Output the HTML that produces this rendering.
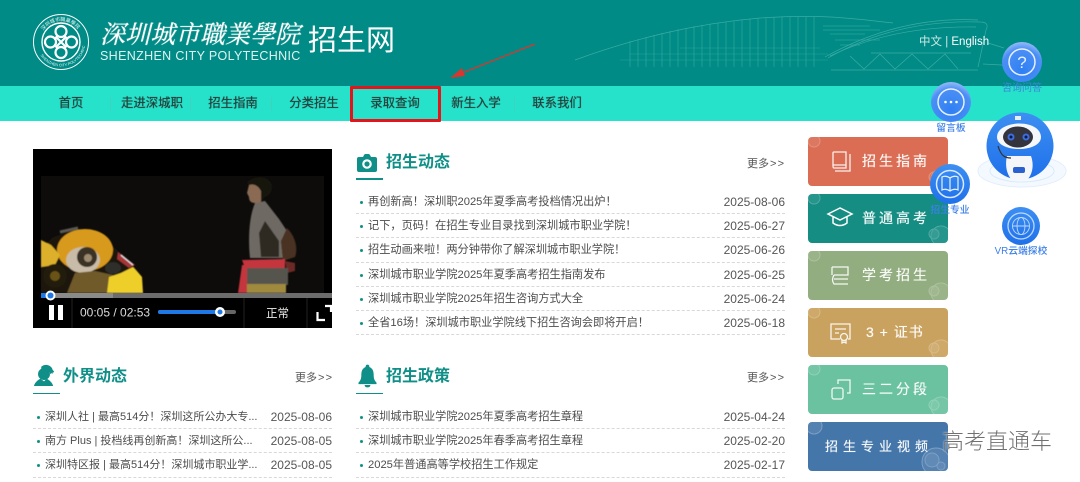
<!DOCTYPE html>
<html lang="zh-CN">
<head>
<meta charset="utf-8">
<title>深圳城市职业学院招生网</title>
<style>
*{margin:0;padding:0;box-sizing:border-box}
html,body{width:1080px;height:482px;overflow:hidden;background:#fff}
body{position:relative;font-family:"Liberation Sans","Noto Sans CJK SC",sans-serif;color:#444;font-size:12px}
.a{position:absolute;white-space:nowrap}
#hd{position:absolute;left:0;top:0;width:1080px;height:86px;background:#008b86}
#nav{position:absolute;left:0;top:86px;width:1080px;height:35px;background:#26e2cb}
.n{position:absolute;top:86px;height:35px;line-height:35px;width:80px;text-align:center;font-size:12.4px;color:#24423c;text-shadow:0 0 .7px #24423c}
.sep{position:absolute;top:97px;width:1px;height:14px;background:#3fd3be}
#box{position:absolute;left:350px;top:86px;width:91px;height:36px;border:3.5px solid #e5141b;border-radius:1px}
.tt{position:absolute;font-size:16px;font-weight:700;color:#0f8f88;line-height:20px;white-space:nowrap}
.ul{position:absolute;width:27px;background:#0f8f88}
.more{position:absolute;font-size:11px;line-height:16px;color:#555;white-space:nowrap}
.more i{font-style:normal;letter-spacing:1.2px;margin-left:1px}
.li{position:absolute;height:24.2px;border-bottom:1px dashed #d8d8d8;line-height:24px;font-size:11.2px;color:#4c4c4c;white-space:nowrap}
.li.s{font-size:11px}
.li:before{content:"";position:absolute;left:4px;top:11px;width:3px;height:3px;border-radius:50%;background:#0f8f88}
.li span{position:absolute;left:12px;top:0}
.li b{position:absolute;right:0;top:0;font-weight:400;color:#555;font-size:12px}
.card{position:absolute;left:808px;width:140px;height:49px;border-radius:4px;color:#fff;font-size:14px;line-height:49px;overflow:hidden;opacity:.97}
.card .tx{position:absolute;top:0;white-space:nowrap;opacity:.95;letter-spacing:3px;text-shadow:0 0 .5px #fff}
.card svg{position:absolute;left:0;top:0}
.fl{position:absolute;font-size:9.5px;color:#3d80e8;text-align:center;white-space:nowrap;font-weight:500;transform:translateX(-50%);line-height:12px}
</style>
</head>
<body>
<div id="hd"></div>
<svg class="a" style="left:560px;top:0" width="520" height="86" fill="none" stroke="#5cbcb5" stroke-width=".7" opacity=".65">
<path d="M15 60C70 40 130 24 200 18C260 14 290 18 333 23"/>
<g opacity=".5"><path d="M60 60H268M70 54H268M120 48H260"/></g>
<path d="M263 26H310M263 30H320M270 34H305M275 40H320M280 45H300" opacity=".7"/>
<path d="M70 41V67M78 39V67M86 37V67M94 35V67M102 33V67M110 31V67M118 29V67M126 28V67M134 26V67M142 25V67M150 24V67M158 23V67M166 22V67M174 21V67M182 20V67M190 19V67M198 18V67M206 18V67M214 17V67M222 17V67M230 17V67M238 17V67M246 17V67M254 17V67" opacity=".8"/>
<path d="M268 58C310 34 360 20 420 22C428 22 428 26 426 30L418 67"/>
<path d="M270 56C312 36 362 26 416 27M265 57C310 32 360 17 418 20"/>
<path d="M271 70H418M311 53H411M290 56L304 69L320 54L335 69L352 54L368 69L385 54L398 69"/>
<path d="M428 43L444 48M423 64L460 66"/>
</svg>
<!-- logo -->
<svg class="a" style="left:32px;top:13px" width="58" height="58" viewBox="0 0 58 58" fill="none" stroke="#fff">
<circle cx="29" cy="29" r="27.500" stroke-width="1"/>
<circle cx="29" cy="29" r="19" stroke-width="1.400"/>
<path id="tp" d="M8 29A21 21 0 0 1 50 29" stroke="none"/>
<path id="bp" d="M4.500 29A24.500 24.500 0 0 0 53.500 29" stroke="none"/>
<text font-size="5" fill="#e8f6f5" stroke="none" font-family="Noto Sans CJK TC,sans-serif"><textPath href="#tp" textLength="40" startOffset="12">深圳城市職業學院</textPath></text>
<text font-size="3.800" fill="#e8f6f5" stroke="none" font-family="Liberation Sans,sans-serif"><textPath href="#bp" startOffset="14">SHENZHEN CITY POLYTECHNIC</textPath></text>
<g stroke-width="2.200">
<circle cx="29" cy="18.500" r="5.500"/><circle cx="29" cy="39.500" r="5.500"/><circle cx="18.500" cy="29" r="5.500"/><circle cx="39.500" cy="29" r="5.500"/>
<path d="M23.500 23.500L34.500 34.500M34.500 23.500L23.500 34.500"/>
</g>
</svg>
<div class="a" style="left:100px;top:16px;font-family:'Noto Serif CJK SC','Noto Serif CJK TC',serif;font-size:25px;line-height:34px;color:#fff;font-style:italic;text-shadow:0 0 .9px #fff">深圳城市職業學院</div>
<div class="a" style="left:100px;top:48px;font-size:12.500px;line-height:16px;color:#dff3f1;letter-spacing:.35px">SHENZHEN CITY POLYTECHNIC</div>
<div class="a" style="left:308px;top:21px;font-size:29px;line-height:40px;color:#fff">招生网</div>
<div class="a" style="left:919px;top:34px;font-size:11.500px;line-height:16px;color:#cfe8e6">中文 | <span style="color:#fff">English</span></div>
<svg class="a" style="left:445px;top:38px" width="95" height="45"><path d="M90 6L12 37" stroke="#d8362e" stroke-width="1.300"/><path d="M5 40L17 30L20 38Z" fill="#d8362e"/></svg>

<div id="nav"></div>
<div class="n" style="left:31px">首页</div>
<div class="n" style="left:112px">走进深城职</div>
<div class="n" style="left:193px">招生指南</div>
<div class="n" style="left:274px">分类招生</div>
<div class="n" style="left:355px">录取查询</div>
<div class="n" style="left:436px">新生入学</div>
<div class="n" style="left:517px">联系我们</div>
<div class="sep" style="left:110px"></div><div class="sep" style="left:190px"></div><div class="sep" style="left:271px"></div><div class="sep" style="left:514px"></div>
<div id="box"></div>

<!-- video -->
<svg class="a" style="left:33px;top:149px" width="299" height="180" viewBox="0 0 299 180">
<defs><filter id="b"><feGaussianBlur stdDeviation=".6"/></filter></defs>
<rect width="299" height="179" fill="#000"/>
<rect x="8" y="27" width="283" height="117" fill="#0d0c0b"/>
<g filter="url(#b)">
<!-- lion -->
<path d="M8 144V100L20 88L45 80L70 88L85 102L100 116L109 128L109 144Z" fill="#1a1408"/>
<ellipse cx="52" cy="101" rx="28" ry="21" fill="#d89a1a"/>
<path d="M8 91L18 96L27 106L22 116L8 118Z" fill="#dcb02a"/>
<ellipse cx="50" cy="111" rx="17" ry="13" fill="#c8bca8"/>
<ellipse cx="54" cy="108" rx="10" ry="10" fill="#3a3026"/>
<circle cx="55" cy="109" r="4" fill="#9c8a70"/>
<circle cx="22" cy="127" r="12" fill="#211a0c"/>
<circle cx="22" cy="127" r="5" fill="#6b5212"/>
<path d="M34 144L42 124L62 122L80 126L82 144Z" fill="#6f5a2a"/>
<path d="M74 144L76 128L88 124L100 118L109 128L110 144Z" fill="#eecf2c"/>
<ellipse cx="80" cy="119" rx="8" ry="6" fill="#2f2e2a"/>
<path d="M85 103L102 116L96 119L84 110Z" fill="#a53438"/>
<path d="M88 106L100 116" stroke="#ddd" stroke-width="1.500"/>
<path d="M27 83L45 79" stroke="#5a5a52" stroke-width="3"/>
<!-- man -->
<path d="M214 34C216 28 236 24 239 36C240 42 236 48 232 48L229 52H224V42L216 36Z" fill="#15120f"/>
<path d="M216 36C222 34 226 38 228 42L228 54H222C218 54 216 52 216 48L214 44Z" fill="#8a6a52"/>
<path d="M222 54L232 52L246 70L254 82L248 92L250 109H217C215 90 216 68 222 54Z" fill="#6e6b64"/>
<path d="M232 72L246 92L246 108H228L226 84Z" fill="#2e2a24"/>
<path d="M254 79C263 88 265 100 262 108L250 112L248 92Z" fill="#4a3022"/>
<path d="M209 111L252 110L252 119H212Z" fill="#c4363e"/>
<path d="M209 116H215L214 144H205Z" fill="#c4363e"/>
<path d="M252 112L262 114L262 122L254 124Z" fill="#6c2a28"/>
<path d="M214 119H255V136H214Z" fill="#55544e"/>
<path d="M214 135H253V144H214Z" fill="#a08a3c"/>
</g>
<!-- bars -->
<rect x="8" y="144" width="291" height="5" fill="#6c6c6c"/>
<rect x="8" y="144" width="72" height="5" fill="#8a8a8a"/>
<rect x="8" y="144" width="9" height="5" fill="#1e78e6"/>
<circle cx="17.500" cy="146.500" r="5" fill="#fff"/><circle cx="17.500" cy="146.500" r="3" fill="#1e78e6"/>
<rect x="16" y="156" width="5" height="15" fill="#fff"/><rect x="25" y="156" width="5" height="15" fill="#fff"/>
<path d="M39 149V179M211 149V179M274 149V179" stroke="#222"/>
<rect x="125" y="161" width="78" height="4" rx="2" fill="#666"/>
<rect x="125" y="161" width="63" height="4" rx="2" fill="#1e78e6"/>
<circle cx="187" cy="163" r="5" fill="#fff"/><circle cx="187" cy="163" r="2.500" fill="#1e78e6"/>
<path d="M284.500 163V171H292M292 157H298V163" fill="none" stroke="#fff" stroke-width="2.200"/>
<text x="47" y="167.500" font-size="12" fill="#ddd" font-family="Liberation Sans,sans-serif">00:05 / 02:53</text>
<text x="233" y="168" font-size="11.500" fill="#eee" font-family="Liberation Sans,Noto Sans CJK SC,sans-serif">正常</text>
</svg>

<!-- section 招生动态 -->
<svg class="a" style="left:357px;top:154px" width="20" height="18" viewBox="0 0 20 18"><path d="M2 3H6L7 1Q7.500 0 8.500 0H11.500Q12.500 0 13 1L14 3H18Q20 3 20 5V16Q20 18 18 18H2Q0 18 0 16V5Q0 3 2 3Z" fill="#0f8f88"/><circle cx="10" cy="10" r="3.700" fill="none" stroke="#fff" stroke-width="2.200"/></svg>
<div class="tt" style="left:386px;top:153px">招生动态</div>
<div class="ul" style="left:356px;top:178px;height:2px"></div>
<div class="more" style="left:747px;top:156px">更多<i>&gt;&gt;</i></div>

<div class="li" style="left:356px;top:190px;width:429px"><span>再创新高！深圳职2025年夏季高考投档情况出炉！</span><b>2025-08-06</b></div>
<div class="li" style="left:356px;top:214.200px;width:429px"><span>记下，页码！在招生专业目录找到深圳城市职业学院！</span><b>2025-06-27</b></div>
<div class="li" style="left:356px;top:238.400px;width:429px"><span>招生动画来啦！两分钟带你了解深圳城市职业学院！</span><b>2025-06-26</b></div>
<div class="li" style="left:356px;top:262.600px;width:429px"><span>深圳城市职业学院2025年夏季高考招生指南发布</span><b>2025-06-25</b></div>
<div class="li" style="left:356px;top:286.800px;width:429px"><span>深圳城市职业学院2025年招生咨询方式大全</span><b>2025-06-24</b></div>
<div class="li" style="left:356px;top:311px;width:429px"><span>全省16场！深圳城市职业学院线下招生咨询会即将开启！</span><b>2025-06-18</b></div>

<!-- section 外界动态 -->
<svg class="a" style="left:33px;top:364px" width="22" height="22" viewBox="0 0 22 24" fill="#0f8f88"><circle cx="11" cy="11" r="6.500"/><path d="M8 3C11 0 17 0 20 5C21 8 20 10 18 11C17 7 13 5 8 6Z"/><path d="M20 6L22 8L20 11Z"/><path d="M7 16C4 18 1 20 0 24H21C20 20 17 18 14 16L11 19Z"/></svg>
<div class="tt" style="left:63px;top:367px">外界动态</div>
<div class="ul" style="left:33px;top:393px;height:1px"></div>
<div class="more" style="left:295px;top:370px">更多<i>&gt;&gt;</i></div>
<div class="li s" style="left:33px;top:405px;width:299px"><span>深圳人社 | 最高514分！深圳这所公办大专...</span><b>2025-08-06</b></div>
<div class="li s" style="left:33px;top:429.200px;width:299px"><span>南方 Plus | 投档线再创新高！深圳这所公...</span><b>2025-08-05</b></div>
<div class="li s" style="left:33px;top:453.400px;width:299px"><span>深圳特区报 | 最高514分！深圳城市职业学...</span><b>2025-08-05</b></div>

<!-- section 招生政策 -->
<svg class="a" style="left:358px;top:364px" width="19" height="24" viewBox="0 0 20 24" fill="#0f8f88"><path d="M10 0C11.500 0 12 1 12 2.500C15.500 4 16.500 7 16.500 11C16.500 15 17.500 17 19.500 19V20.500H.5V19C2.500 17 3.500 15 3.500 11C3.500 7 4.500 4 8 2.500C8 1 8.500 0 10 0Z"/><path d="M7 21.500H13C13 23.500 11.500 24 10 24C8.500 24 7 23.500 7 21.500Z"/></svg>
<div class="tt" style="left:386px;top:367px">招生政策</div>
<div class="ul" style="left:356px;top:393px;height:1px"></div>
<div class="more" style="left:747px;top:370px">更多<i>&gt;&gt;</i></div>
<div class="li" style="left:356px;top:405px;width:429px"><span>深圳城市职业学院2025年夏季高考招生章程</span><b>2025-04-24</b></div>
<div class="li" style="left:356px;top:429.200px;width:429px"><span>深圳城市职业学院2025年春季高考招生章程</span><b>2025-02-20</b></div>
<div class="li" style="left:356px;top:453.400px;width:429px"><span>2025年普通高等学校招生工作规定</span><b>2025-02-17</b></div>

<!-- cards -->
<div class="card" style="top:137px;background:#d9694f"><svg width="140" height="49" fill="none" stroke="#fff"><g opacity=".25" fill="#fff" fill-opacity=".3"><circle cx="6" cy="4" r="6"/><circle cx="133" cy="42" r="10"/><circle cx="126" cy="40" r="5"/></g><g opacity=".9" stroke-width="1.300"><path d="M26 15H38V31H26Q25 31 25 29V16Q25 15 26 15ZM25 28H38"/><path d="M42 17V34H27"/></g></svg><div class="tx" style="left:54px">招生指南</div></div>
<div class="card" style="top:194px;background:#0f8a80"><svg width="140" height="49" fill="none" stroke="#fff"><g opacity=".25" fill="#fff" fill-opacity=".3"><circle cx="6" cy="4" r="6"/><circle cx="133" cy="42" r="10"/><circle cx="126" cy="40" r="5"/></g><g stroke-width="1.500"><path d="M32 14L20 20L32 26L44 20Z"/><path d="M25 23V29Q32 34 39 29V23"/></g></svg><div class="tx" style="left:54px">普通高考</div></div>
<div class="card" style="top:251px;background:#8fab7c"><svg width="140" height="49" fill="none" stroke="#fff"><g opacity=".25" fill="#fff" fill-opacity=".3"><circle cx="6" cy="4" r="6"/><circle cx="133" cy="42" r="10"/><circle cx="126" cy="40" r="5"/></g><g opacity=".9" stroke-width="1.300"><path d="M24 16H40V24H26M26 24Q23 29 26 33H40M26 28H40M24 16V24"/></g></svg><div class="tx" style="left:54px">学考招生</div></div>
<div class="card" style="top:308px;background:#c9a05a"><svg width="140" height="49" fill="none" stroke="#fff"><g opacity=".25" fill="#fff" fill-opacity=".3"><circle cx="6" cy="4" r="6"/><circle cx="133" cy="42" r="10"/><circle cx="126" cy="40" r="5"/></g><g opacity=".9" stroke-width="1.300"><path d="M32 31H23V16H42V31H40"/><path d="M27 21H38M27 25H31"/><circle cx="36" cy="29" r="3.500"/><path d="M34 32V35L36 34L38 35V32"/></g></svg><div class="tx" style="left:58px;letter-spacing:1px">3 + 证书</div></div>
<div class="card" style="top:365px;background:#66c19d"><svg width="140" height="49" fill="none" stroke="#fff"><g opacity=".25" fill="#fff" fill-opacity=".3"><circle cx="6" cy="4" r="6"/><circle cx="133" cy="42" r="10"/><circle cx="126" cy="40" r="5"/></g><g opacity=".9" stroke-width="1.300"><rect x="24" y="23" width="11" height="11" rx="2"/><path d="M30 19V15H42V28H39"/></g></svg><div class="tx" style="left:54px">三二分段</div></div>
<div class="card" style="top:422px;background:#3f72a8"><svg width="140" height="49" fill="none" stroke="#fff"><g opacity=".3" fill="#fff" fill-opacity=".3"><circle cx="6" cy="4" r="8"/><circle cx="128" cy="40" r="14"/><circle cx="124" cy="38" r="7"/><circle cx="133" cy="44" r="4"/></g></svg><div class="tx" style="left:17px;font-size:13px;letter-spacing:5px">招生专业视频</div></div>

<!-- floating buttons -->
<svg class="a" style="left:925px;top:35px" width="155" height="230" viewBox="925 35 155 230">
<defs>
<radialGradient id="g" cx=".5" cy=".7" r=".75"><stop offset="0" stop-color="#2f80f4"/><stop offset=".7" stop-color="#4c8ff5"/><stop offset="1" stop-color="#a9c8f8"/></radialGradient>
<linearGradient id="r" x1="0" y1="0" x2="0" y2="1"><stop offset="0" stop-color="#3d8ff2"/><stop offset="1" stop-color="#1f70ea"/></linearGradient>
</defs>
<circle cx="1022" cy="62" r="20" fill="url(#g)"/>
<circle cx="1022" cy="62" r="13" fill="none" stroke="#e6f0ff" stroke-width="1.500"/>
<text x="1022" y="68" text-anchor="middle" font-size="17" fill="#e6f0ff" font-family="Liberation Sans,sans-serif">?</text>
<circle cx="951" cy="102" r="20" fill="url(#g)"/>
<circle cx="951" cy="102" r="13" fill="none" stroke="#e6f0ff" stroke-width="1.500"/>
<circle cx="945.500" cy="102" r="1.300" fill="#fff"/><circle cx="951" cy="102" r="1.300" fill="#fff"/><circle cx="956.500" cy="102" r="1.300" fill="#fff"/>
<!-- robot -->
<ellipse cx="1022" cy="171" rx="44" ry="16" fill="#eef6ff" opacity=".6" stroke="#cfe4fb"/>
<ellipse cx="1022" cy="171" rx="32" ry="11" fill="none" stroke="#d8eafc"/>
<circle cx="1020" cy="146" r="33.500" fill="url(#r)"/>
<path d="M997 137C997 120 1040 118 1041 137C1041 153 997 153 997 137Z" fill="#f5f7fb"/>
<ellipse cx="1018" cy="137" rx="15" ry="10.500" fill="#33343e"/>
<circle cx="1011" cy="137" r="3.500" fill="#3d6ee0"/><circle cx="1026" cy="137" r="3.500" fill="#3d6ee0"/>
<circle cx="1011" cy="137" r="1.500" fill="#0c1a44"/><circle cx="1026" cy="137" r="1.500" fill="#0c1a44"/>
<path d="M1015 116H1021V120H1015Z" fill="#e6eef8"/>
<path d="M1007 156H1031C1034 164 1033 174 1027 180H1012C1006 174 1005 164 1007 156Z" fill="#f4f6fa"/>
<rect x="1013" y="167" width="12" height="6" rx="2" fill="#2c5fd0"/>
<path d="M998 146C1001 156 1005 158 1011 158" fill="none" stroke="#333" stroke-width="1.200"/>
<circle cx="950" cy="184" r="20" fill="url(#r)"/>
<circle cx="950" cy="184" r="13.500" fill="none" stroke="#dbe9ff" stroke-width="1.500"/>
<path d="M950 178C947 176 944 176 942 177V190C944 189 947 189 950 191C953 189 956 189 958 190V177C956 176 953 176 950 178ZM950 178V191" fill="none" stroke="#e6f0ff" stroke-width="1.200"/>
<circle cx="1021" cy="226" r="19" fill="url(#r)"/>
<circle cx="1021" cy="226" r="13" fill="none" stroke="#bdd8ff" stroke-width="1.300"/>
<g fill="none" stroke="#bdd8ff" stroke-width=".9"><circle cx="1021" cy="226" r="8.500"/><ellipse cx="1021" cy="226" rx="4" ry="8.500"/><path d="M1012.500 226H1029.500"/></g>
</svg>
<div class="fl" style="left:1022px;top:83px;color:#3b87d8;font-size:10px;opacity:.85">咨询问答</div>
<div class="fl" style="left:951px;top:123px;font-size:9.800px">留言板</div>
<div class="fl" style="left:950px;top:205px;font-size:9.800px">招生专业</div>
<div class="fl" style="left:1021px;top:246px;font-size:9.800px">VR云端探校</div>

<div class="a" style="left:942px;top:427px;font-size:22px;line-height:30px;color:#707070;text-shadow:0 0 2px #fff;font-weight:300">高考直通车</div>
</body>
</html>
